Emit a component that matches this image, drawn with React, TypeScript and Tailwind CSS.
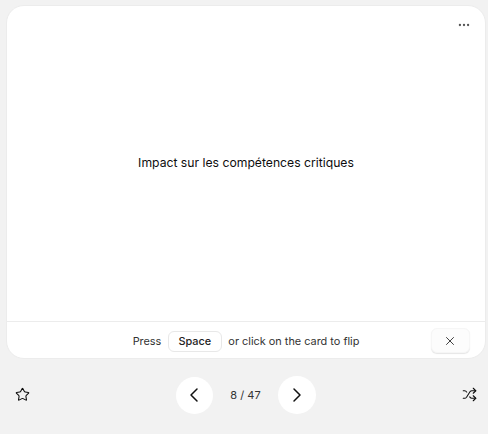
import React from 'react';
import { ChevronLeft, ChevronRight, Ellipsis, Shuffle, Star, X } from 'lucide-react';

function App() {
    return (
        <div className="flex h-[434px] w-[488px] flex-col bg-[#f2f2f2] pt-[5px] font-['Inter',sans-serif] text-[#0d0d0d]">
            <div className="ml-[6px] flex h-[354px] w-[480px] flex-col rounded-[18px] border border-[#ececec] bg-white">
                <div className="flex h-[37px] items-start justify-end pr-[14px] pt-[12px]">
                    <Ellipsis size={14} strokeWidth={2} className="text-[#555]" />
                </div>
                <div className="flex flex-1 items-start justify-center pt-[111px] text-[12.2px] leading-[17px]">
                    Impact sur les compétences critiques
                </div>
                <div className="relative flex h-[37px] items-center justify-center border-t border-[#ececec] pt-[2px] text-[10.9px] text-[#333]">
                    <span>Press</span>
                    <span className="mx-[6.5px] flex h-[21px] w-[54px] items-center justify-center rounded-[6px] border border-[#e8e8e8] font-medium text-[#222]">Space</span>
                    <span>or click on the card to flip</span>
                    <button className="absolute right-[15px] top-[6px] flex h-[25px] w-[39px] items-center justify-center rounded-[6px] border border-[#f6f6f6] bg-[#fcfcfc] pr-[2px] text-[#333] shadow-[0_1px_1px_rgba(0,0,0,0.1)]">
                        <X size={14} strokeWidth={1.6} />
                    </button>
                </div>
            </div>
            <div className="flex flex-1 items-start justify-between pl-[15px] pr-[11px] pt-[17px]">
                <div className="mt-[11px]"><Star size={15} strokeWidth={1.7} /></div>
                <div className="flex items-center gap-[17px] text-[11px] text-[#333]">
                    <button className="flex h-[37px] w-[37px] items-center justify-center rounded-full bg-white pr-[2px] text-[#111]">
                        <ChevronLeft size={24} strokeWidth={1.5} />
                    </button>
                    <span>8 / 47</span>
                    <button className="flex h-[38px] w-[38px] items-center justify-center rounded-full bg-white text-[#111]">
                        <ChevronRight size={24} strokeWidth={1.5} />
                    </button>
                </div>
                <div className="mt-[11px]"><Shuffle size={15} strokeWidth={1.7} /></div>
            </div>
        </div>
    );
}

export default App;
